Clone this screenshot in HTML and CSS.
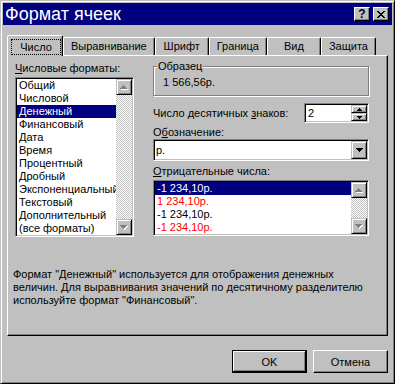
FILE: index.html
```html
<!DOCTYPE html>
<html lang="ru">
<head>
    <meta charset="UTF-8">
    <meta name="viewport" content="width=device-width, initial-scale=1.0">
    <title>Формат ячеек</title>
    <link rel="stylesheet" href="styles.css">
</head>
<body>

<div class="dialog">

    <!-- Title bar -->
    <div class="titlebar">
        <span class="title">Формат ячеек</span>
        <span class="cap-btn help">?</span>
        <span class="cap-btn close">
            <svg width="8" height="7" viewBox="0 0 8 7" shape-rendering="crispEdges"><path d="M0 0h2v1H0zM6 0h2v1H6zM1 1h2v1H1zM5 1h2v1H5zM2 2h4v1H2zM3 3h2v1H3zM2 4h4v1H2zM1 5h2v1H1zM5 5h2v1H5zM0 6h2v1H0zM6 6h2v1H6z" fill="#000"/></svg>
        </span>
    </div>

    <div class="dialog-body">

        <!-- Tabs -->
        <div class="tabs">
            <div class="tab active"><span class="focus">Число</span></div>
            <div class="tab">Выравнивание</div>
            <div class="tab">Шрифт</div>
            <div class="tab">Граница</div>
            <div class="tab">Вид</div>
            <div class="tab">Защита</div>
        </div>

        <div class="panel">
            <div class="columns">

                <!-- Number formats list -->
                <div class="col-left">
                    <div class="label"><u>Ч</u>исловые форматы:</div>
                    <div class="listbox formats">
                        <ul class="items">
                            <li>Общий</li>
                            <li>Числовой</li>
                            <li class="sel">Денежный</li>
                            <li>Финансовый</li>
                            <li>Дата</li>
                            <li>Время</li>
                            <li>Процентный</li>
                            <li>Дробный</li>
                            <li>Экспоненциальный</li>
                            <li>Текстовый</li>
                            <li>Дополнительный</li>
                            <li>(все форматы)</li>
                        </ul>
                        <div class="vscroll">
                            <span class="sbtn"><svg width="8" height="5" viewBox="0 0 8 5" shape-rendering="crispEdges"><path transform="translate(1 1)" d="M3 0h1v1h1v1h1v1h1v1H0V3h1V2h1V1h1z" fill="#fff"/><path d="M3 0h1v1h1v1h1v1h1v1H0V3h1V2h1V1h1z" fill="#808080"/></svg></span>
                            <span class="track"></span>
                            <span class="sbtn"><svg width="8" height="5" viewBox="0 0 8 5" shape-rendering="crispEdges"><path transform="translate(1 1)" d="M0 0h7v1H6v1H5v1H4v1H3V3H2V2H1V1H0z" fill="#fff"/><path d="M0 0h7v1H6v1H5v1H4v1H3V3H2V2H1V1H0z" fill="#808080"/></svg></span>
                        </div>
                    </div>
                </div>

                <div class="col-right">
                    <div class="groupbox">
                        <div class="legend">Образец</div>
                        <div class="sample">1 566,56р.</div>
                    </div>

                    <div class="field-row">
                        <span>Число десятичных <u>з</u>наков:</span>
                        <div class="spin">
                            <span class="spin-value">2</span>
                            <div class="spin-btns">
                                <span class="sbtn small"><svg width="5" height="3" viewBox="0 0 5 3" shape-rendering="crispEdges"><path d="M2 0h1v1h1v1h1v1H0V2h1V1h1z" fill="#000"/></svg></span>
                                <span class="sbtn small"><svg width="5" height="3" viewBox="0 0 5 3" shape-rendering="crispEdges"><path d="M0 0h5v1H4v1H3v1H2V2H1V1H0z" fill="#000"/></svg></span>
                            </div>
                        </div>
                    </div>

                    <div class="label gap-sm">О<u>б</u>означение:</div>
                    <div class="combo">
                        <span class="combo-value">р.</span>
                        <span class="sbtn drop"><svg width="7" height="4" viewBox="0 0 7 4" shape-rendering="crispEdges"><path d="M0 0h7v1H6v1H5v1H4v1H3V3H2V2H1V1H0z" fill="#000"/></svg></span>
                    </div>

                    <div class="label gap-md"><u>О</u>трицательные числа:</div>
                    <div class="listbox negatives">
                        <ul class="items">
                            <li class="sel">-1 234,10р.</li>
                            <li class="neg">1 234,10р.</li>
                            <li>-1 234,10р.</li>
                            <li class="neg">-1 234,10р.</li>
                        </ul>
                        <div class="vscroll">
                            <span class="sbtn"><svg width="8" height="5" viewBox="0 0 8 5" shape-rendering="crispEdges"><path transform="translate(1 1)" d="M3 0h1v1h1v1h1v1h1v1H0V3h1V2h1V1h1z" fill="#fff"/><path d="M3 0h1v1h1v1h1v1h1v1H0V3h1V2h1V1h1z" fill="#808080"/></svg></span>
                            <span class="track"></span>
                            <span class="sbtn"><svg width="8" height="5" viewBox="0 0 8 5" shape-rendering="crispEdges"><path transform="translate(1 1)" d="M0 0h7v1H6v1H5v1H4v1H3V3H2V2H1V1H0z" fill="#fff"/><path d="M0 0h7v1H6v1H5v1H4v1H3V3H2V2H1V1H0z" fill="#808080"/></svg></span>
                        </div>
                    </div>
                </div>
            </div>

            <p class="desc">Формат "Денежный" используется для отображения денежных<br>величин. Для выравнивания значений по десятичному разделителю<br>используйте формат "Финансовый".</p>
        </div>

        <div class="buttons">
            <button class="btn default">OK</button>
            <button class="btn">Отмена</button>
        </div>
    </div>
</div>

</body>
</html>
```

FILE: styles.css
```css
body {
    margin: 0;
    background-color: #fff;
    font-family: "Liberation Sans", Arial, sans-serif;
    font-size: 11px;
    color: #000;
}
u {
    text-decoration: underline;
    text-underline-offset: 1px;
}

/* window frame */
.dialog {
    width: 395px;
    height: 384px;
    box-sizing: border-box;
    background-color: #c0c0c0;
    border: 1px solid;
    border-color: #c0c0c0 #000 #000 #c0c0c0;
    box-shadow: inset 1px 1px #fff, inset -1px -1px #808080;
    padding: 2px;
}
.titlebar {
    height: 22px;
    background-color: #000080;
    color: #fff;
    display: flex;
    align-items: center;
    padding: 0 3px 0 2px;
}
.title {
    flex: 1;
    font-size: 18px;
}
.cap-btn {
    width: 16px;
    height: 14px;
    box-sizing: border-box;
    background-color: #c0c0c0;
    border: 1px solid;
    border-color: #fff #000 #000 #fff;
    box-shadow: inset -1px -1px #808080;
    display: flex;
    align-items: center;
    justify-content: center;
    color: #000;
    font-weight: bold;
    font-size: 12px;
    line-height: 12px;
}
.help {
    margin-right: 3px;
}

.dialog-body {
    padding: 0 4px;
}

/* tabs */
.tabs {
    display: flex;
    align-items: flex-end;
    height: 20px;
    margin-top: 10px;
}
.tab {
    box-sizing: border-box;
    min-width: 54px;
    height: 18px;
    padding: 0 7px;
    text-align: center;
    line-height: 17px;
    white-space: nowrap;
    border: 1px solid #fff;
    border-bottom: 0;
    border-right-color: #000;
    border-radius: 2px 2px 0 0;
    box-shadow: inset -1px 0 #808080;
}
.tab.active {
    min-width: 56px;
    height: 21px;
    margin-bottom: -1px;
    padding: 3px 0 0 3px;
    position: relative;
    z-index: 1;
    background-color: #c0c0c0;
}
.focus {
    display: block;
    height: 16px;
    box-sizing: border-box;
    border: 1px dotted #000;
    line-height: 14px;
    margin-right: 1px;
}

.panel {
    height: 281px;
    box-sizing: border-box;
    border: 1px solid;
    border-color: #fff #000 #000 #fff;
    box-shadow: inset -1px -1px #808080;
    padding: 6px 0 0 5px;
}
.columns {
    display: flex;
}
.col-left {
    width: 119px;
    margin-left: 2px;
}
.col-right {
    width: 216px;
    margin-left: 19px;
    margin-top: 4px;
}
.label {
    line-height: 13px;
}
.gap-sm {
    margin-top: 3px;
}
.gap-md {
    margin-top: 4px;
}

/* sunken boxes */
.listbox,
.spin,
.combo {
    box-sizing: border-box;
    display: flex;
    background-color: #fff;
    border: 1px solid;
    border-color: #808080 #fff #fff #808080;
    box-shadow: inset 1px 1px #000, inset -1px -1px #c0c0c0;
    padding: 1px;
}
.formats {
    height: 160px;
    margin-top: 2px;
}
.negatives {
    height: 56px;
    margin-top: 2px;
}
.items {
    list-style: none;
    margin: 0;
    padding: 0;
    flex: 1;
    min-width: 0;
    overflow: hidden;
}
.items li {
    line-height: 13px;
    padding-left: 2px;
    white-space: nowrap;
}
.items .sel {
    background-color: #000080;
    color: #fff;
}
.items .neg {
    color: #f00;
}
.vscroll {
    width: 16px;
    display: flex;
    flex-direction: column;
}
.track {
    flex: 1;
    background: repeating-conic-gradient(#c0c0c0 0 25%, #fff 0 50%) 0 0 / 2px 2px;
}
.sbtn {
    box-sizing: border-box;
    width: 16px;
    height: 16px;
    flex-shrink: 0;
    background-color: #c0c0c0;
    border: 1px solid;
    border-color: #c0c0c0 #000 #000 #c0c0c0;
    box-shadow: inset 1px 1px #fff, inset -1px -1px #808080;
    display: flex;
    align-items: center;
    justify-content: center;
}
.sbtn svg {
    display: block;
}
.sbtn.small {
    height: 8px;
}
.sbtn.drop {
    height: 18px;
}

/* sample group */
.groupbox {
    border: 1px solid #808080;
    box-shadow: inset 1px 1px #fff, 1px 1px #fff;
    padding-bottom: 6px;
}
.legend {
    width: fit-content;
    margin: -7px 0 0 3px;
    padding: 0 1px;
    background-color: #c0c0c0;
    line-height: 13px;
}
.sample {
    margin-top: 3px;
    padding-left: 9px;
    line-height: 13px;
}

.field-row {
    display: flex;
    align-items: center;
    margin-top: 7px;
}
.spin {
    margin-left: auto;
    width: 65px;
    height: 20px;
}
.spin-value {
    flex: 1;
    padding-left: 2px;
    line-height: 16px;
}
.spin-btns {
    display: flex;
    flex-direction: column;
}
.combo {
    height: 22px;
}
.combo-value {
    flex: 1;
    padding-left: 1px;
    line-height: 18px;
}

.desc {
    margin: 31px 0 0;
    line-height: 13px;
    white-space: nowrap;
}

/* push buttons */
.buttons {
    display: flex;
    justify-content: flex-end;
    gap: 6px;
    margin-top: 14px;
}
.btn {
    width: 75px;
    height: 23px;
    padding: 0;
    font: inherit;
    color: #000;
    background-color: #c0c0c0;
    border: 1px solid;
    border-color: #fff #000 #000 #fff;
    box-shadow: inset -1px -1px #808080;
}
.btn.default {
    border-color: #000;
    box-shadow: inset -1px -1px #000, inset 1px 1px #fff, inset -2px -2px #808080;
}
```
